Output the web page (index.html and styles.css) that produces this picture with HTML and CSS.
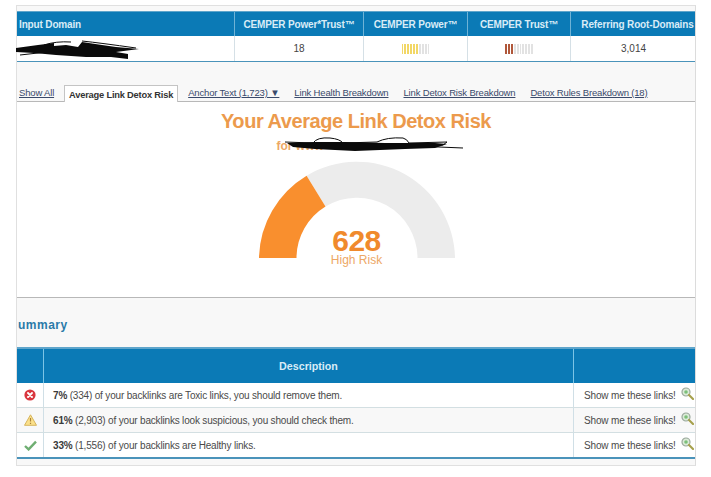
FILE: index.html
```html
<!DOCTYPE html>
<html lang="en">
<head>
<meta charset="utf-8">
<title>Average Link Detox Risk</title>
<link rel="stylesheet" href="styles.css">
</head>
<body>
<main class="panel">
  <section class="domain-table">
    <div class="dt-row dt-head">
      <div class="dt-cell dt-first">Input Domain</div>
      <div class="dt-cell">CEMPER Power*Trust™</div>
      <div class="dt-cell">CEMPER Power™</div>
      <div class="dt-cell">CEMPER Trust™</div>
      <div class="dt-cell dt-last">Referring Root-Domains</div>
    </div>
    <div class="dt-row dt-body">
      <div class="dt-cell dt-first">
        <svg class="scribble-a" viewBox="0 0 125 20" aria-hidden="true">
          <path class="ink-fill" d="M0 8 L22 5 L38 3 L38 6 L50 5 L62 7 L66 2 L86 5 L100 7 L123 9 L100 12 L112 14 L112 19 L95 17 L70 17 L40 15 L18 13 L0 12Z"/>
          <path class="ink-line" d="M28 5 Q40 1 55 2 M66 1 Q85 3 120 8 M4 15 L40 11"/>
        </svg>
      </div>
      <div class="dt-cell">18</div>
      <div class="dt-cell">
        <span class="meter">
          <i class="tick tick-y"></i><i class="tick tick-y"></i><i class="tick tick-y"></i><i class="tick tick-y"></i><i class="tick tick-y"></i><i class="tick tick-y"></i><i class="tick tick-off"></i><i class="tick tick-off"></i><i class="tick tick-off"></i><i class="tick tick-off"></i>
        </span>
      </div>
      <div class="dt-cell">
        <span class="meter">
          <i class="tick tick-r"></i><i class="tick tick-r"></i><i class="tick tick-r"></i><i class="tick tick-off"></i><i class="tick tick-off"></i><i class="tick tick-off"></i><i class="tick tick-off"></i><i class="tick tick-off"></i><i class="tick tick-off"></i><i class="tick tick-off"></i>
        </span>
      </div>
      <div class="dt-cell dt-last">3,014</div>
    </div>
  </section>

  <nav class="tabs">
    <a class="tab tab-tight" href="#">Show All</a>
    <a class="tab tab-active" href="#">Average Link Detox Risk</a>
    <a class="tab" href="#">Anchor Text (1,723) ▼</a>
    <a class="tab" href="#">Link Health Breakdown</a>
    <a class="tab" href="#">Link Detox Risk Breakdown</a>
    <a class="tab" href="#">Detox Rules Breakdown (18)</a>
  </nav>

  <section class="risk">
    <h1 class="risk-title">Your Average Link Detox Risk</h1>
    <div class="risk-for">
      <span class="risk-for-text">for www</span>
      <svg class="scribble-b" viewBox="0 0 180 18" aria-hidden="true">
        <path class="ink-fill" d="M2 7 L30 6 L60 6 L100 7 L150 7 L162 8 L150 12 L120 13 L70 15 L30 13 L8 11Z"/>
        <path class="ink-line" d="M0 6 L28 7 Q32 1 45 2 Q55 3 58 7 L92 6 Q102 1 118 2 Q122 3 124 7 L162 6 L158 9 L130 10 L178 12"/>
      </svg>
    </div>
    <div class="gauge">
      <svg class="gauge-svg" viewBox="0 0 198 100" aria-label="Gauge">
        <path class="gauge-track" d="M48.6 15.7 A98 98 0 0 1 197 98 L159.5 98 A60.5 60.5 0 0 0 67.5 46.5Z"/>
        <path class="gauge-value" d="M1 98 A98 98 0 0 1 48.6 15.7 L67.5 46.5 A60.5 60.5 0 0 0 38.5 98Z"/>
      </svg>
      <div class="gauge-label">
        <div class="gauge-num">628</div>
        <div class="gauge-text">High Risk</div>
      </div>
    </div>
  </section>

  <section class="summary">
    <h2 class="summary-title">ummary</h2>
    <div class="st-row st-head">
      <div class="st-cell"></div>
      <div class="st-cell st-desc">Description</div>
      <div class="st-cell"></div>
    </div>
    <div class="st-row st-line">
      <div class="st-cell st-icon">
        <svg class="status" viewBox="0 0 12 12"><circle cx="6" cy="6" r="5.6" fill="#d9363e"/><path d="M4 4 L8 8 M8 4 L4 8" stroke="#fff" stroke-width="1.9" stroke-linecap="round"/></svg>
      </div>
      <div class="st-cell st-text"><span><b>7%</b> (334) of your backlinks are Toxic links, you should remove them.</span></div>
      <div class="st-cell st-link"><span>Show me these links!</span>
        <svg class="lens" viewBox="0 0 13 13"><circle cx="5" cy="5" r="4" fill="#dcebd8" stroke="#9aa89c" stroke-width="1.2"/><circle cx="5" cy="5" r="1.8" fill="#7cc07a"/><path d="M8 8 L12 12" stroke="#a6a04c" stroke-width="2.2" stroke-linecap="round"/></svg>
      </div>
    </div>
    <div class="st-row st-line st-alt">
      <div class="st-cell st-icon">
        <svg class="status status-warn" viewBox="0 0 13 12"><path d="M6.5 .8 L12.5 11.3 L.5 11.3Z" fill="#fbe08a" stroke="#d6b45e" stroke-width="1" stroke-linejoin="round"/><path d="M6.5 4 V7.6 M6.5 8.8 V9.9" stroke="#a9813a" stroke-width="1.2"/></svg>
      </div>
      <div class="st-cell st-text"><span><b>61%</b> (2,903) of your backlinks look suspicious, you should check them.</span></div>
      <div class="st-cell st-link"><span>Show me these links!</span>
        <svg class="lens" viewBox="0 0 13 13"><circle cx="5" cy="5" r="4" fill="#dcebd8" stroke="#9aa89c" stroke-width="1.2"/><circle cx="5" cy="5" r="1.8" fill="#7cc07a"/><path d="M8 8 L12 12" stroke="#a6a04c" stroke-width="2.2" stroke-linecap="round"/></svg>
      </div>
    </div>
    <div class="st-row st-line st-last">
      <div class="st-cell st-icon">
        <svg class="status status-ok" viewBox="0 0 13 11"><path d="M1 6 L4.6 9.4 L12 1.6" fill="none" stroke="#6fae72" stroke-width="2.4"/></svg>
      </div>
      <div class="st-cell st-text"><span><b>33%</b> (1,556) of your backlinks are Healthy links.</span></div>
      <div class="st-cell st-link"><span>Show me these links!</span>
        <svg class="lens" viewBox="0 0 13 13"><circle cx="5" cy="5" r="4" fill="#dcebd8" stroke="#9aa89c" stroke-width="1.2"/><circle cx="5" cy="5" r="1.8" fill="#7cc07a"/><path d="M8 8 L12 12" stroke="#a6a04c" stroke-width="2.2" stroke-linecap="round"/></svg>
      </div>
    </div>
  </section>
</main>
</body>
</html>
```

FILE: styles.css
```css
* { box-sizing: border-box; }
html, body { margin: 0; padding: 0; background: #fff; }
body { font-family: "Liberation Sans", Arial, sans-serif; color: #444; font-size: 10px; }

.panel {
  width: 680px;
  height: 461px;
  margin: 5px 0 0 16px;
  border: 1px solid #e0e0e0;
  border-right-color: #dcdcdc;
  background: #f8f8f8;
  padding-top: 5px;
}

.domain-table { border-bottom: 1px solid #4a93ba; background: #fff; }
.dt-row { display: grid; grid-template-columns: 217px 129px 104px 103px 125px; }
.dt-head { height: 25px; background: #0b7ab6; border-top: 1px solid #5fa5cb; color: #d9ecf6; font-weight: bold; font-size: 10px; letter-spacing: -.15px; }
.dt-body { height: 25px; color: #444; }
.dt-cell { display: flex; align-items: center; justify-content: center; border-left: 1px solid #d5e0e6; white-space: nowrap; }
.dt-head .dt-cell { border-left-color: #6fb3d6; }
.dt-cell.dt-first { justify-content: flex-start; padding-left: 2px; border-left: 0; }
.dt-cell.dt-last { padding-left: 9px; }
.dt-body .dt-cell.dt-last { padding-left: 1px; }
.scribble-a { width: 125px; height: 20px; margin-left: -3px; margin-top: 3px; }
.ink-fill { fill: #0a0a0a; }
.ink-line { fill: none; stroke: #0a0a0a; stroke-width: 1; }

.meter { display: inline-flex; gap: 1px; height: 10px; }
.tick { display: block; width: 1.9px; height: 10px; }
.tick-y { background: #f2d765; }
.tick-r { background: #b0573a; }
.tick-off { background: #e2e2e2; }

.tabs {
  display: flex;
  align-items: flex-end;
  height: 40px;
  padding-left: 2px;
  border-bottom: 1px solid #b8b8b8;
  font-size: 9.5px;
  letter-spacing: -.17px;
}
.tab { color: #3a4a6b; text-decoration: underline; margin-right: 15px; padding-bottom: 1px; line-height: 14px; white-space: nowrap; }
.tab-tight { margin-right: 10px; }
.tab-active {
  margin-bottom: -1px;
  margin-right: 10px;
  padding: 2px 4px 2px;
  height: 17px;
  background: #fff;
  border: 1px solid #c4c4c4;
  border-bottom: 0;
  color: #333;
  font-size: 9.3px;
  letter-spacing: -.2px;
  font-weight: bold;
  text-decoration: none;
}

.risk {
  height: 196px;
  background: #fff;
  border-bottom: 1px solid #b8b8b8;
  display: flex;
  flex-direction: column;
  align-items: center;
  padding-top: 8px;
}
.risk-title { margin: 0; font-size: 20px; line-height: 23px; font-weight: bold; letter-spacing: -.45px; color: #ec9a4c; }
.risk-for { position: relative; width: 180px; height: 16px; margin-top: 5px; margin-left: 21px; font-size: 12px; font-weight: bold; color: #eda765; line-height: 16px; }
.risk-for-text { display: block; }
.scribble-b { position: absolute; left: 8px; top: -2px; width: 180px; height: 18px; }

.gauge { position: relative; width: 198px; height: 100px; margin-top: 6px; margin-left: 1px; }
.gauge-svg { display: block; width: 198px; height: 100px; }
.gauge-track { fill: #ececec; }
.gauge-value { fill: #f98f2e; }
.gauge-label { position: absolute; left: 0; right: 0; top: 68px; text-align: center; }
.gauge-num { font-size: 30px; line-height: 26px; font-weight: bold; letter-spacing: -.5px; color: #f08a2c; }
.gauge-text { font-size: 12px; line-height: 13px; color: #eda765; }

.summary-title { margin: 0; height: 49px; padding: 20px 0 0 1px; font-size: 12px; line-height: 15px; font-weight: bold; letter-spacing: .5px; color: #2a7aa8; }
.st-row { display: grid; grid-template-columns: 26px 530px 122px; }
.st-cell { display: flex; align-items: center; border-left: 1px solid #d0dfe6; }
.st-cell:first-child { border-left: 0; }
.st-head { height: 36px; background: #0b7ab6; border-top: 2px solid #5fa5cb; color: #d9ecf6; font-weight: bold; font-size: 10.7px; }
.st-head .st-cell { border-left-color: #7cc4e6; }
.st-desc { justify-content: center; }
.st-line { height: 25px; background: #fff; border-bottom: 1px solid #d3dfe2; }
.st-alt { background: #f8f8f8; }
.st-last { border-bottom: 2px solid #4a93ba; height: 26px; }
.st-icon { justify-content: center; }
.status { width: 12px; height: 12px; }
.status-warn { width: 13px; height: 12px; }
.status-ok { width: 13px; height: 11px; }
.st-text { padding: 1px 0 0 9px; white-space: nowrap; font-size: 10px; letter-spacing: -.18px; color: #4a4a4a; }
.st-text b { color: #3a3a3a; }
.st-link { padding: 1px 0 0 10px; white-space: nowrap; font-size: 10px; letter-spacing: -.14px; color: #4a4a4a; gap: 5px; }
.lens { width: 13px; height: 13px; margin-top: -5px; }
```
